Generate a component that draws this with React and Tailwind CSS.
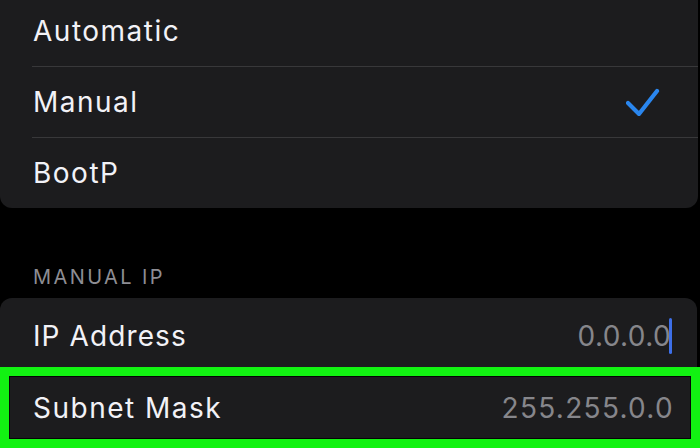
import React from 'react';

const font = { fontFamily: 'Inter, "Liberation Sans", sans-serif' };

const Check = () => (
  <svg width="34" height="28" viewBox="0 0 34 28" fill="none" className="mr-[38px]">
    <path d="M2 15 L13 26 L31 3" stroke="#2a86ee" strokeWidth="4.2" strokeLinecap="round" strokeLinejoin="round" />
  </svg>
);

const Row = ({ label, children, last }) => (
  <div className="flex flex-col">
    <div className="h-[70px] flex items-center justify-between pl-[33px]">
      <span className="text-[28px] text-[#f2f2f7] tracking-[1.5px]">{label}</span>
      {children}
    </div>
    {!last && <div className="ml-[32px] h-px bg-[#38383a]" />}
  </div>
);

export default function App() {
  return (
    <div className="w-[700px] h-[448px] overflow-hidden bg-black" style={font}>
      {/* ── Config method ── */}
      <div className="-mt-[4px] mr-[2px] bg-[#1c1c1e] rounded-b-[12px] flex flex-col">
        <Row label="Automatic" />
        <Row label="Manual">
          <Check />
        </Row>
        <Row label="BootP" last />
      </div>

      {/* ── Manual IP ── */}
      <div className="pl-[33px] mt-[57px] mb-[9px] h-[24px] flex items-center">
        <span className="text-[20px] text-[#8d8d93] tracking-[2.4px] uppercase">Manual IP</span>
      </div>

      <div className="mr-[3px] bg-[#1c1c1e] rounded-t-[12px] flex flex-col">
        <div className="h-[72px] pt-[4px] flex items-center justify-between pl-[33px] pr-[25px]">
          <span className="text-[28px] text-[#f2f2f7] tracking-[1.1px]">IP Address</span>
          <span className="flex items-center">
            <span className="text-[28px] text-[#86868b] tracking-[0.4px]">0.0.0.0</span>
            <span className="w-[3px] h-[36px] bg-[#3d6fe8] rounded-full -ml-[2px]" />
          </span>
        </div>
        <div className="relative h-[72px] pt-[4px] flex items-center justify-between pl-[33px] pr-[24px]">
          <span className="text-[28px] text-[#f2f2f7] tracking-[1.5px]">Subnet Mask</span>
          <span className="text-[28px] text-[#86868b] tracking-[1.3px] -mr-[1px]">255.255.0.0</span>
          {/* highlight annotation */}
          <div className="absolute left-0 -right-[3px] -top-[3px] h-[81px] border-[9px] border-[#12f212] shadow-[inset_0_0_0_1px_#050505]" />
        </div>
      </div>
    </div>
  );
}
